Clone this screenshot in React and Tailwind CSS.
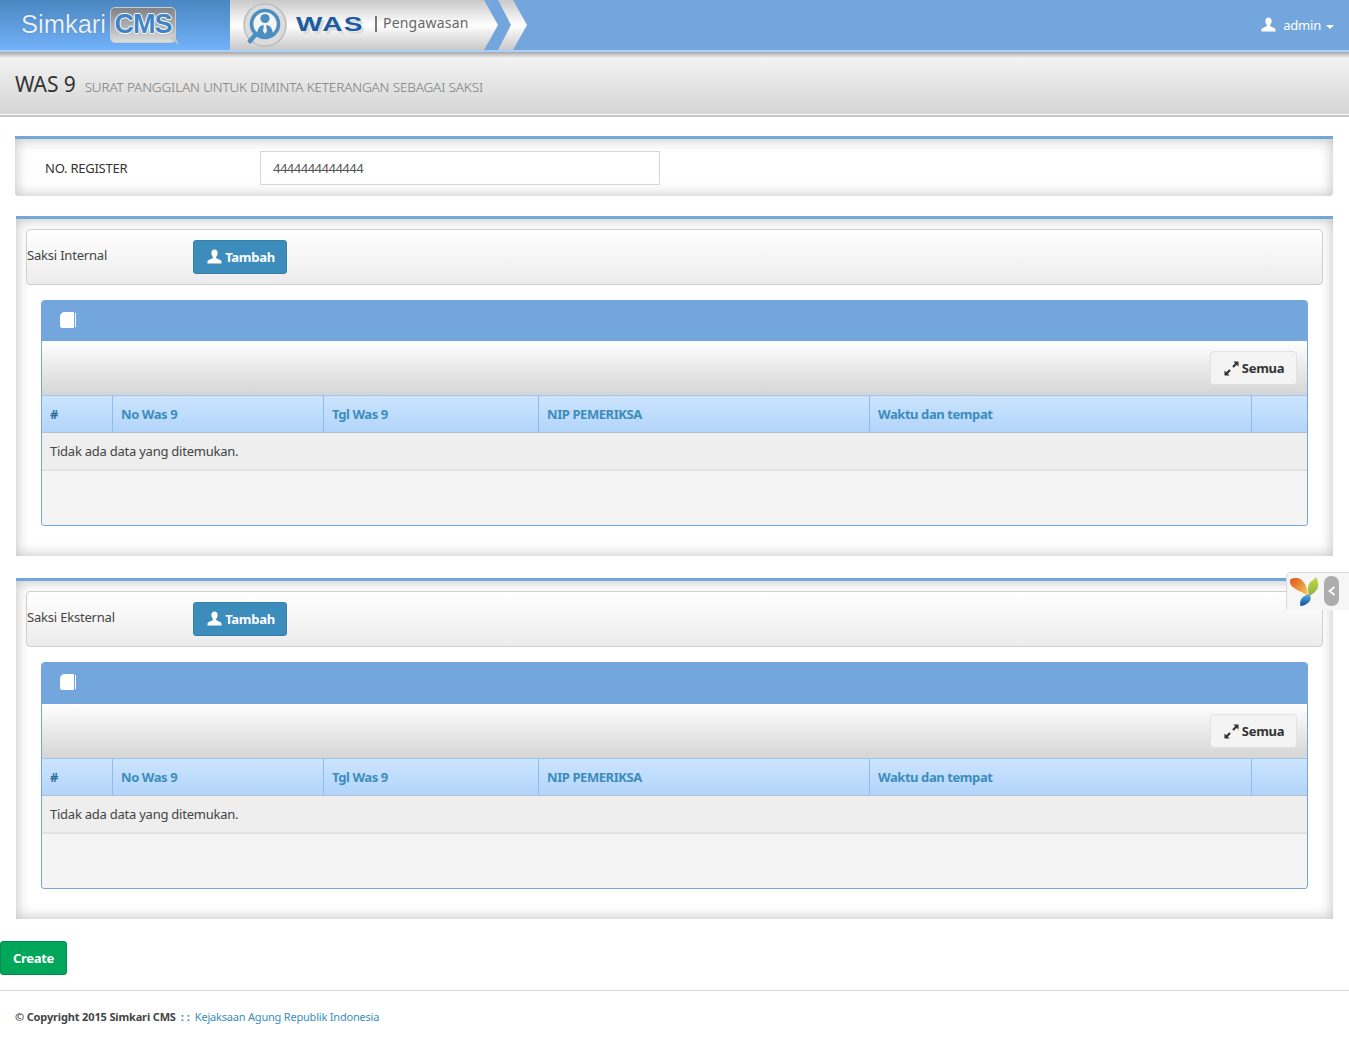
import React from 'react';

const UserIcon = ({ className }) => (
  <svg viewBox="0 0 16 16" className={className} fill="currentColor">
    <path d="M8 0.5C5.9 0.5 4.7 2.1 4.7 4.2C4.7 6 5.4 7.6 6.3 8.5L6.3 9.7L1.6 11.9C0.8 12.3 0.5 13 0.5 14L0.5 15.5L15.5 15.5L15.5 14C15.5 13 15.2 12.3 14.4 11.9L9.7 9.7L9.7 8.5C10.6 7.6 11.3 6 11.3 4.2C11.3 2.1 10.1 0.5 8 0.5Z" />
  </svg>
);

const BookIcon = () => (
  <svg viewBox="0 0 16 16" className="w-[16px] h-[16px] text-white" fill="currentColor">
    <path d="M5 0L14 0L14 16L3 16C1.2 16 0 15 0 13.4L0 5C0 2 2 0 5 0Z" />
    <path d="M15 1L16 1L16 15L15 15Z" />
  </svg>
);

const ResizeIcon = () => (
  <svg viewBox="0 0 16 16" className="w-[15px] h-[15px] text-[#333]" fill="currentColor">
    <path d="M10 0.5L15.5 0.5L15.5 6L13.6 4.1L10.4 7.3L8.7 5.6L11.9 2.4Z" />
    <path d="M0.5 15.5L0.5 10L2.4 11.9L5.6 8.7L7.3 10.4L4.1 13.6L6 15.5Z" />
  </svg>
);

const Logo = () => (
  <div className="w-[230px] h-full shrink-0 flex items-center bg-gradient-to-b from-[#4a86c0] to-[#72b2fa] pl-[21px] pb-[1px]">
    <span className='text-[25.5px] leading-none text-[#e8f0f8] font-["Liberation_Sans",sans-serif] [text-shadow:0_0_1px_#2c5f90]'>Simkari</span>
    <div className="relative ml-[4px] w-[66px] h-[36px] rounded-[5px] border border-[#c8ccd0] bg-gradient-to-b from-[#7f8286] to-[#dcdddd] flex items-center justify-center">
      <span className='text-[27px] leading-none font-bold tracking-[-1px] text-[#3f84c8] font-["Liberation_Sans",sans-serif] [text-shadow:1px_0_0_#fff,-1px_0_0_#fff,0_1px_0_#fff,0_-1px_0_#fff]'>CMS</span>
      <svg viewBox="0 0 10 8" className="absolute right-[-4px] bottom-[-3px] w-[10px] h-[8px] text-[#c6c8ca]" fill="currentColor">
        <path d="M0 0L6 0L10 8Z" />
      </svg>
    </div>
  </div>
);

const WasBadge = () => (
  <div className="flex h-full shrink-0">
    <div className="w-[254px] h-full flex items-center bg-gradient-to-b from-[#c9c9c9] via-[#ffffff] to-[#c9c9c9] pl-[13px]">
      <svg viewBox="0 0 44 44" className="w-[44px] h-[44px] shrink-0">
        <circle cx="22" cy="22" r="21" fill="#dcdcdc" stroke="#bdbdbd" strokeWidth="1.5" />
        <circle cx="22" cy="21" r="13.5" fill="#f4f4f4" stroke="#4a8fc0" strokeWidth="3.6" />
        <path d="M13 31L7 38" stroke="#4a8fc0" strokeWidth="4.5" strokeLinecap="round" />
        <circle cx="22" cy="15.5" r="4.6" fill="#4a8fc0" />
        <path d="M14 33C14 25 17 22 22 22C27 22 30 25 30 33Z" fill="#4a8fc0" />
        <path d="M21 22L23 22L24 28L22 31L20 28Z" fill="#f4f4f4" />
      </svg>
      <span className='ml-[9px] mb-[3px] w-[66px] text-[21px] leading-none font-bold tracking-[1px] scale-x-[1.33] origin-left text-[#1c5ba2] font-["Liberation_Sans",sans-serif] [text-shadow:2px_3px_0_#dddddd]'>WAS</span>
      <span className="ml-[13px] mb-[3px] w-[2px] h-[16px] bg-[#777]" />
      <span className="ml-[6px] mb-[5px] text-[14px] leading-none text-[#666] tracking-[0.2px]">Pengawasan</span>
    </div>
    <svg viewBox="0 0 43 50" className="w-[43px] h-[50px]">
      <defs>
        <linearGradient id="band" x1="0" y1="0" x2="0" y2="1">
          <stop offset="0" stopColor="#c9c9c9" />
          <stop offset="0.5" stopColor="#ffffff" />
          <stop offset="1" stopColor="#c9c9c9" />
        </linearGradient>
      </defs>
      <path d="M0 0L14 25L0 50Z" fill="url(#band)" />
      <path d="M14 0L29 0L43 25L29 50L14 50L27 25Z" fill="url(#band)" />
    </svg>
  </div>
);

const Header = () => (
  <header className="h-[52px] bg-[#73a6dc] border-b-2 border-[#a9d1fb] flex items-center justify-between">
    <div className="flex h-full items-center">
      <Logo />
      <WasBadge />
    </div>
    <div className="flex items-center pr-[15px] text-white text-[13px] tracking-[-0.2px]">
      <UserIcon className="w-[15px] h-[15px] mr-[7px] mb-[2px]" />
      <span className="mt-[1px]">admin</span>
      <span className="ml-[5px] mt-[3px] w-0 h-0 border-x-[4px] border-x-transparent border-t-[4px] border-t-white" />
    </div>
  </header>
);

const TitleBar = () => (
  <div className="h-[65px] border-b-[2px] border-[#c4c4c4] bg-white pb-[1px]">
    <div className="relative h-full flex items-center pl-[15px] pt-[2px] bg-gradient-to-b from-[#f6f6f6] to-[#d5d5d5]">
      <div className="absolute inset-x-0 top-0 h-[6px] bg-gradient-to-b from-[#a6a6a6] to-[#f4f4f4]" />
      <h1 className="text-[21px] leading-none text-[#333] tracking-[-0.1px]">WAS 9</h1>
      <small className="ml-[9px] mt-[7px] text-[13.5px] leading-none font-light text-[#7a7a7a] tracking-[-0.14px]">SURAT PANGGILAN UNTUK DIMINTA KETERANGAN SEBAGAI SAKSI</small>
    </div>
  </div>
);

const columns = [
  { label: '#', width: 'w-[71px]' },
  { label: 'No Was 9', width: 'w-[211px]' },
  { label: 'Tgl Was 9', width: 'w-[215px]' },
  { label: 'NIP PEMERIKSA', width: 'w-[331px]' },
  { label: 'Waktu dan tempat', width: 'w-[382px]' },
  { label: '', width: 'flex-1' },
];

const GridTable = ({ headingHeight }) => (
  <div className="rounded-[4px] border border-[#73a6dc] border-t-0 overflow-hidden">
    <div className={`${headingHeight} -mx-px bg-[#73a6dc] flex items-start pl-[19px] pt-[12px]`}>
      <BookIcon />
    </div>
    <div className="h-[55px] border-b border-[#9ec7f0] bg-gradient-to-b from-[#ffffff] to-[#d5d5d5] flex items-center justify-end pr-[10px]">
      <button className="h-[34px] w-[87px] rounded-[4px] border border-[#e2e2e2] bg-[#f4f4f4] text-[#333] text-[13px] font-bold tracking-[-0.3px] flex items-center justify-center gap-[3px] pl-[1px]">
        <ResizeIcon />
        <span className="pt-[1px]">Semua</span>
      </button>
    </div>
    <div className="h-[37px] flex bg-gradient-to-b from-[#cce4fe] to-[#b2d5fb] border-b border-[#b5c0cc]">
      {columns.map((col, i) => (
        <div key={i} className={`${col.width} ${i < 5 ? 'border-r border-[#8ebcee]' : ''} flex items-center pl-[8px] pt-[1px] text-[13px] font-bold tracking-[-0.42px] ${i === 0 ? 'text-[#2a6a9c]' : 'text-[#3c8dbc]'}`}>
          {col.label}
        </div>
      ))}
    </div>
    <div className="h-[38px] bg-[#eeeeee] border-b-2 border-[#e2e2e2] flex items-center pl-[8px] pt-[1px] text-[13px] tracking-[-0.24px] text-[#444]">
      Tidak ada data yang ditemukan.
    </div>
    <div className="h-[54px] bg-[#f4f4f4]" />
  </div>
);

const SaksiPanel = ({ title, headingHeight }) => (
  <section className="mx-[16px] border-t-[3px] border-[#73a6dc] bg-white shadow-[inset_0_0_14px_#bdbdbd] pt-[10px] px-[10px] pb-[30px]">
    <div className="h-[56px] rounded-[4px] border border-[#cfcfcf] bg-gradient-to-b from-[#ffffff] to-[#ececec] flex items-center">
      <span className="w-[166px] text-[13px] tracking-[-0.2px] text-[#444] mb-[3px]">{title}</span>
      <button className="h-[34px] w-[94px] rounded-[3px] border border-[#367fa9] bg-[#3c8dbc] text-white text-[13px] font-bold tracking-[-0.3px] flex items-center justify-center gap-[3px] pl-[2px]">
        <UserIcon className="w-[15px] h-[15px] mb-[2px]" />
        <span className="pt-[1px]">Tambah</span>
      </button>
    </div>
    <div className="mt-[15px] mx-[15px]">
      <GridTable headingHeight={headingHeight} />
    </div>
  </section>
);

const YiiToolbar = () => (
  <div className="absolute top-[572px] right-0 w-[63px] h-[38px] rounded-tl-[5px] border-t border-l border-[#d8d8d8] bg-[#f6f6f6] flex items-start pt-[3px] pl-[2px] gap-[5px]">
    <svg viewBox="0 0 30 30" className="w-[30px] h-[30px]">
      <defs>
        <linearGradient id="yiiOrange" x1="0" y1="0" x2="1" y2="1">
          <stop offset="0" stopColor="#e0501c" />
          <stop offset="1" stopColor="#f8cf60" />
        </linearGradient>
        <linearGradient id="yiiGreen" x1="0.5" y1="0" x2="0.5" y2="1">
          <stop offset="0" stopColor="#c3d94b" />
          <stop offset="1" stopColor="#8fb13a" />
        </linearGradient>
        <linearGradient id="yiiBlue" x1="0.5" y1="0" x2="0.5" y2="1">
          <stop offset="0" stopColor="#5fb0dc" />
          <stop offset="1" stopColor="#0e4f9c" />
        </linearGradient>
      </defs>
      <path d="M1 5C1 2.5 4 1.5 8 2C13 2.5 16 7 18 13C18.6 15 19 18 19 20C14 16 9 15 5 12C2 10 1 8 1 5Z" fill="url(#yiiOrange)" />
      <path d="M27 1C29 4 29.6 8 29 11C28 15 24 18 20.5 20C18.5 15 18.6 11 20 8C21.5 5 25 4 27 1Z" fill="url(#yiiGreen)" />
      <path d="M20 18C22.5 21 22 24 20 26C17.5 28.5 14 30 11.5 30C10.5 26 11.5 23 14 21C16 19.5 18 19 20 18Z" fill="url(#yiiBlue)" />
    </svg>
    <div className="w-[15px] h-[30px] rounded-[7px] bg-[#adadad] flex items-center justify-center">
      <svg viewBox="0 0 8 10" className="w-[8px] h-[10px]" fill="none" stroke="#fff" strokeWidth="1.8">
        <path d="M6.5 1L1.5 5L6.5 9" />
      </svg>
    </div>
  </div>
);

const App = () => {
  return (
    <div className='relative min-h-[1041px] bg-white font-["Noto_Sans",sans-serif]'>
      <Header />
      <TitleBar />

      <section className="mt-[19px] mx-[15px] mr-[16px] h-[60px] rounded-b-[4px] border-t-[3px] border-[#73a6dc] bg-white shadow-[inset_0_0_14px_#bdbdbd] flex items-center">
        <label className="w-[245px] pl-[30px] pt-[2px] text-[13px] tracking-[-0.25px] text-[#333]">NO. REGISTER</label>
        <input
          readOnly
          value="4444444444444"
          className="w-[400px] h-[34px] border border-[#d2d6de] px-[12px] text-[13px] tracking-[-0.5px] text-[#555] outline-none"
        />
      </section>

      <div className="mt-[20px]">
        <SaksiPanel title="Saksi Internal" headingHeight="h-[41px]" />
      </div>
      <div className="mt-[22px]">
        <SaksiPanel title="Saksi Eksternal" headingHeight="h-[42px]" />
      </div>

      <button className="mt-[22px] block w-[67px] h-[34px] pt-[1px] rounded-[3px] border border-[#008d4c] bg-[#00a65a] text-white text-[13px] font-bold tracking-[-0.3px]">
        Create
      </button>

      <footer className="mt-[15px] border-t border-[#d2d6de] pt-[18px] pl-[15px] text-[11px] text-[#444]">
        <span className="font-bold tracking-[-0.15px]">© Copyright 2015 Simkari CMS</span>
        <span className="font-bold text-[#3c8dbc] mx-[5px]">: :</span>
        <span className="text-[#3c8dbc] tracking-[-0.2px]">Kejaksaan Agung Republik Indonesia</span>
      </footer>

      <YiiToolbar />
    </div>
  );
};

export default App;
